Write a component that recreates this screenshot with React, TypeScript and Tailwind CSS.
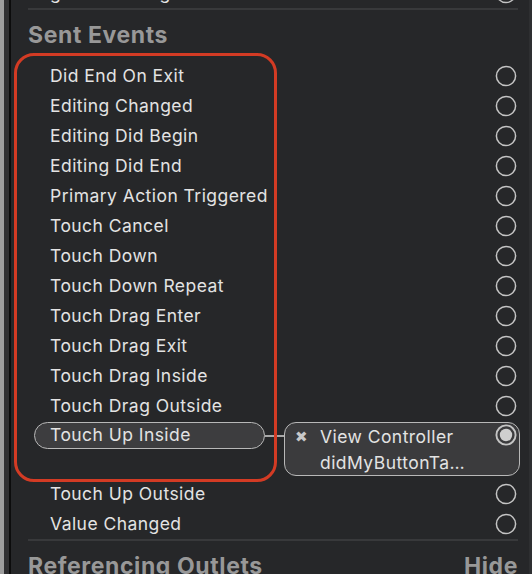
import React from "react";

const EVENTS_TOP = [
  "Did End On Exit",
  "Editing Changed",
  "Editing Did Begin",
  "Editing Did End",
  "Primary Action Triggered",
  "Touch Cancel",
  "Touch Down",
  "Touch Down Repeat",
  "Touch Drag Enter",
  "Touch Drag Exit",
  "Touch Drag Inside",
  "Touch Drag Outside",
];

const EVENTS_BOTTOM = ["Touch Up Outside", "Value Changed"];

const rowText = "text-[17.5px] tracking-[0.45px] text-[#e3e3e3]";
const headText = "text-[23px] font-bold tracking-[0.6px] text-[#989898]";

function Ring({ filled = false }: { filled?: boolean }) {
  return (
    <svg width="22" height="22" viewBox="0 0 22 22" className="shrink-0">
      <circle cx="11" cy="11" r="9.6" fill="none" stroke="#c4c4c4" strokeWidth={filled ? 1.9 : 1.5} />
      {filled && <circle cx="11" cy="11" r="6.2" fill="#cfcfcf" />}
    </svg>
  );
}

function EventRow({ label }: { label: string }) {
  return (
    <div className="flex h-[30px] shrink-0 items-center justify-between pl-[22px] pr-[1px]">
      <span className={rowText}>{label}</span>
      <Ring />
    </div>
  );
}

function Divider() {
  return <div className="h-[2px] shrink-0 bg-[#38393b]" />;
}

export default function App() {
  return (
    <div
      className="relative flex h-[574px] w-[532px] overflow-hidden bg-[#262729]"
      style={{ fontFamily: "Inter, 'Liberation Sans', sans-serif" }}
    >
      {/* window edge */}
      <div className="w-[4px] shrink-0 bg-[#9e9e9e]" />
      <div className="w-[5px] shrink-0 bg-[#303032]" />
      <div className="w-[2px] shrink-0 bg-[#0c0c0c]" />

      <div className="flex flex-1 flex-col pl-[17px] pr-[11px]">
        {/* cut-off row from the section above */}
        <div className="-mt-[22px] shrink-0">
          <EventRow label="gestureRecognizers" />
        </div>
        <Divider />

        <div className="flex h-[51px] shrink-0 items-center">
          <h2 className={headText}>Sent Events</h2>
        </div>

        {EVENTS_TOP.map((e) => (
          <EventRow key={e} label={e} />
        ))}

        {/* connected event */}
        <div className="flex h-[58px] shrink-0 items-start pt-[1px]">
          <div className="ml-[6px] flex h-[27px] w-[231px] shrink-0 items-center rounded-full border-[1.5px] border-[#b8b8b8] bg-[#3d3d3f] pl-[15px]">
            <span className={rowText}>Touch Up Inside</span>
          </div>
          <div className="mt-[13px] h-[1.5px] w-[19px] shrink-0 bg-[#a8a8a8]" />
          <div className="-mr-[2px] flex h-[54px] flex-1 items-start rounded-[12px] border-[1.5px] border-[#b8b8b8] bg-[#3b3b3d] pl-[10px] pr-[2px] pt-[1px]">
            <span
              className="mt-[2px] w-[25px] shrink-0 text-[15px] leading-[22px] text-[#c8c8c8]"
              style={{ fontFamily: "'DejaVu Sans', sans-serif" }}
            >
              ✖
            </span>
            <div className="flex flex-1 flex-col">
              <span className={`flex h-[26px] items-center ${rowText}`}>View Controller</span>
              <span className={`flex h-[26px] items-center ${rowText}`}>didMyButtonTa…</span>
            </div>
            <Ring filled />
          </div>
        </div>

        {EVENTS_BOTTOM.map((e) => (
          <EventRow key={e} label={e} />
        ))}
        <Divider />

        <div className="flex h-[51px] shrink-0 items-center justify-between">
          <h2 className={headText}>Referencing Outlets</h2>
          <span className={headText}>Hide</span>
        </div>
      </div>

      <div className="w-[3px] shrink-0 bg-[#2e2f31]" />

      {/* annotation box */}
      <div className="pointer-events-none absolute left-[14px] top-[53px] h-[429px] w-[263px] rounded-[20px] border-[3.5px] border-[#d33b24]" />
    </div>
  );
}
